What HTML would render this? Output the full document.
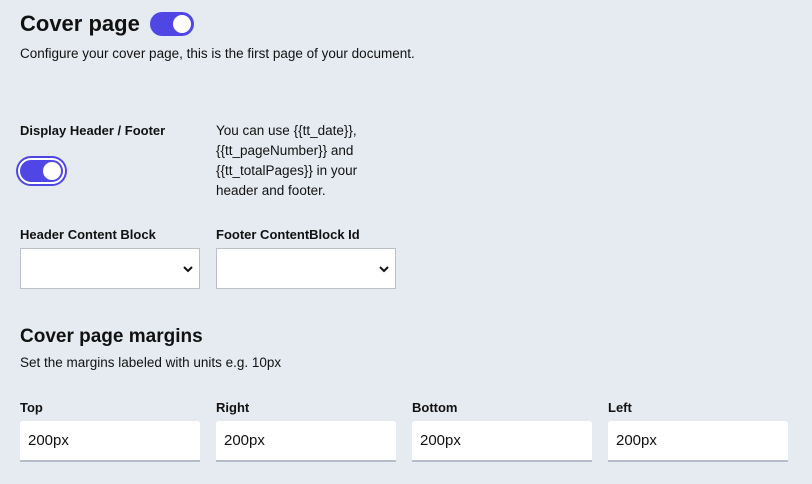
<!DOCTYPE html><html><head><style>
body{margin:0;width:812px;height:484px;background:#e6ebf1;font-family:"Liberation Sans",sans-serif;color:#111;position:relative;overflow:hidden}
.a{position:absolute;white-space:nowrap}
.t{font-size:13.5px}
.b{font-size:13px;font-weight:bold}
.tg{position:absolute;background:#4f46e5;border-radius:14px}
.tg i{position:absolute;background:#fff;border-radius:50%}
.sel{position:absolute;width:178px;height:39px;background:#fff;border:1px solid #b9c0c8;top:248px}
.sel svg{position:absolute;right:6px;top:16px}
.inp{position:absolute;width:180px;height:39px;background:#fff;border-bottom:2px solid #b6bfc9;border-radius:3px 3px 0 0;top:421px;font-size:15px;line-height:40px;text-indent:8px}
</style></head><body>
<div class="a" style="left:20px;top:11px;font-size:22px;font-weight:bold">Cover page</div>
<div class="tg" style="left:150px;top:12px;width:44px;height:24px"><i style="left:23px;top:3px;width:18px;height:18px"></i></div>
<div class="a t" style="left:20px;top:46px">Configure your cover page, this is the first page of your document.</div>
<div class="a b" style="left:20px;top:123px">Display Header / Footer</div>
<div class="tg" style="left:18px;top:158px;width:43px;height:22px;border:2px solid #fff;box-shadow:0 0 0 2px #4f46e5"><i style="left:23px;top:2px;width:18px;height:18px"></i></div>
<div class="a t" style="left:216px;top:121px;line-height:20px">You can use {{tt_date}},<br>{{tt_pageNumber}} and<br>{{tt_totalPages}} in your<br>header and footer.</div>
<div class="a b" style="left:20px;top:227px">Header Content Block</div>
<div class="a b" style="left:216px;top:227px">Footer ContentBlock Id</div>
<div class="sel" style="left:20px"><svg width="10" height="8"><path d="M1 2l4 4 4-4" stroke="#111" stroke-width="2" fill="none"/></svg></div>
<div class="sel" style="left:216px"><svg width="10" height="8"><path d="M1 2l4 4 4-4" stroke="#111" stroke-width="2" fill="none"/></svg></div>
<div class="a" style="left:20px;top:326px;font-size:19px;font-weight:bold">Cover page margins</div>
<div class="a t" style="left:20px;top:355px">Set the margins labeled with units e.g. 10px</div>
<div class="a b" style="left:20px;top:400px">Top</div>
<div class="a b" style="left:216px;top:400px">Right</div>
<div class="a b" style="left:412px;top:400px">Bottom</div>
<div class="a b" style="left:608px;top:400px">Left</div>
<div class="inp" style="left:20px">200px</div>
<div class="inp" style="left:216px">200px</div>
<div class="inp" style="left:412px">200px</div>
<div class="inp" style="left:608px">200px</div>
</body></html>
